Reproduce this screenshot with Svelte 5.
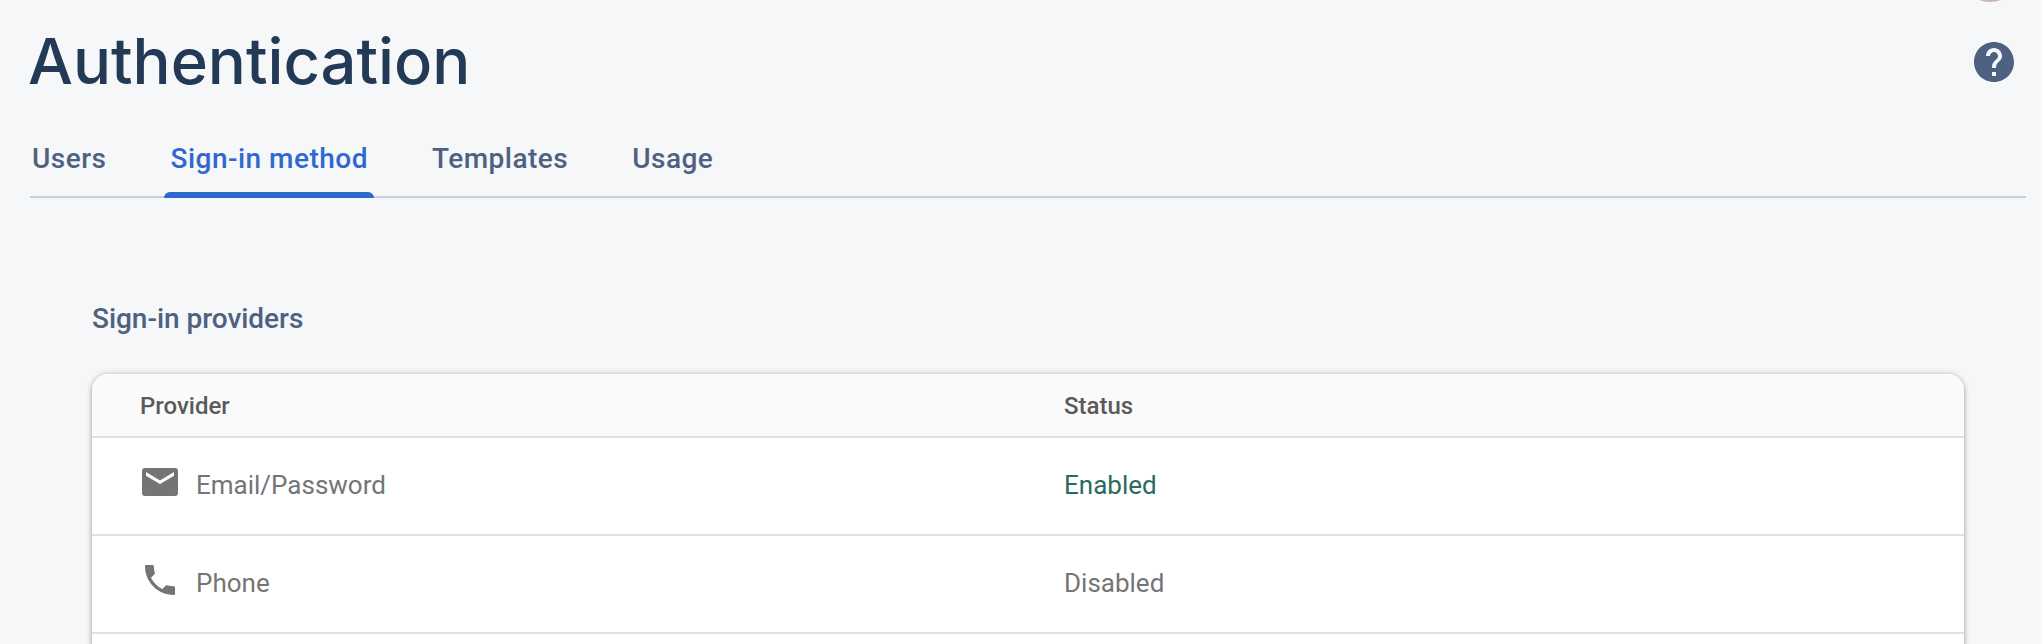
<script>
  const tabs = ['Users', 'Sign-in method', 'Templates', 'Usage'];
  const active = 'Sign-in method';
  const providers = [
    { name: 'Email/Password', icon: 'mail', enabled: true },
    { name: 'Phone', icon: 'phone', enabled: false },
    { name: '', icon: '', enabled: false }
  ];
</script>

<div class="page">
  <div class="avatar"></div>
  <header>
    <h1>Authentication</h1>
    <svg class="help" viewBox="0 0 24 24"><path d="M12 2C6.48 2 2 6.48 2 12s4.48 10 10 10 10-4.48 10-10S17.52 2 12 2zm1 17h-2v-2h2v2zm2.07-7.75l-.9.92C13.45 12.9 13 13.5 13 15h-2v-.5c0-1.1.45-2.1 1.17-2.83l1.24-1.26c.37-.36.59-.86.59-1.41 0-1.1-.9-2-2-2s-2 .9-2 2H8c0-2.21 1.79-4 4-4s4 1.79 4 4c0 .88-.36 1.68-.93 2.25z" /></svg>
  </header>
  <nav>
    {#each tabs as tab}
      <a class:active={tab === active}>{tab}</a>
    {/each}
  </nav>
  <main>
    <h2>Sign-in providers</h2>
    <div class="card">
      <div class="row head"><span>Provider</span><span>Status</span></div>
      {#each providers as p}
        <div class="row">
          <div class="provider">
            {#if p.icon === 'mail'}
              <svg class="icon" viewBox="0 0 40 40"><path fill-rule="evenodd" d="M5 4h30a3 3 0 0 1 3 3v22a3 3 0 0 1-3 3H5a3 3 0 0 1-3-3V7a3 3 0 0 1 3-3zM6 8v3.800L20 20l14-8.200V8l-14 8.400z" /></svg>
            {:else if p.icon === 'phone'}
              <svg class="icon" viewBox="0 0 40 40"><path d="M6.300 3h6.200c.8 0 1.300.5 1.300 1.200.1 2.200.4 4.400 1 6.500.2.700 0 1.200-.4 1.600L11 15.700c2.500 5 6.300 8.800 11.300 11.300l3.500-3.400c.4-.4.900-.5 1.500-.3 2.100.6 4.200.9 6.500 1 .7 0 1.200.5 1.200 1.200v6.200c0 .8-.5 1.300-1.200 1.300C17.900 33 5 20.100 5 4.300 5 3.500 5.500 3 6.300 3z" /></svg>
            {/if}
            <span>{p.name}</span>
          </div>
          {#if p.name}<span class:enabled={p.enabled}>{p.enabled ? 'Enabled' : 'Disabled'}</span>{/if}
        </div>
      {/each}
    </div>
  </main>
</div>

<style>
  :global(body) { background: #f6f7f9; overflow: hidden; }
  .page { position: relative; box-sizing: border-box; width: 2042px; height: 644px; overflow: hidden; background: #f6f7f9; font-family: Roboto, sans-serif; }
  .avatar { position: absolute; left: 1958px; top: -62px; width: 64px; height: 64px; border-radius: 50%; background: #c9b5b5; }
  header { display: flex; justify-content: space-between; height: 124px; padding: 0 24px 0 28px; }
  h1 { margin: 21px 0 0; font: 540 63.3px/80px Inter, sans-serif; color: #223a56; }
  .help { width: 48px; height: 48px; margin-top: 38px; fill: #4e6180; }
  nav { display: flex; gap: 51.4px; box-sizing: border-box; height: 74px; margin: 0 16px 0 30px; border-bottom: 2px solid #c5d0dd; }
  a { position: relative; padding: 0 6px 0 6.700px; font-size: 28px; line-height: 70px; font-weight: 500; letter-spacing: .48px; color: #4e6180; }
  a:first-child { padding-left: 2px; }
  a.active { color: #3067d0; }
  a.active::after { content: ''; position: absolute; left: 0; right: 0; bottom: -2px; height: 6px; border-radius: 6px 6px 0 0; background: #3067d0; }
  main { padding: 99px 78px 0 92px; }
  h2 { margin: 0; height: 77px; font-size: 28px; line-height: 44px; font-weight: 500; letter-spacing: -.03px; color: #4e6180; }
  .card { overflow: hidden; border-radius: 16px 16px 0 0; background: #fff; box-shadow: 0 2px 4px rgba(0,0,0,.24), 0 0 6px rgba(0,0,0,.2); }
  .row { display: grid; grid-template-columns: 924px 1fr; align-items: center; box-sizing: border-box; height: 98px; padding: 0 0 2px 48px; border-bottom: 2px solid #e0e0e0; font-size: 26px; color: #757575; }
  .head { height: 64px; padding: 2px 0 0 48px; background: #fafafa; font-size: 24px; font-weight: 500; color: #5a5a5a; }
  .provider { display: flex; align-items: center; gap: 16px; height: 40px; }
  .icon { width: 40px; height: 40px; margin-top: -2px; fill: #757575; }
  .enabled { color: #2a6b5c; }
</style>
